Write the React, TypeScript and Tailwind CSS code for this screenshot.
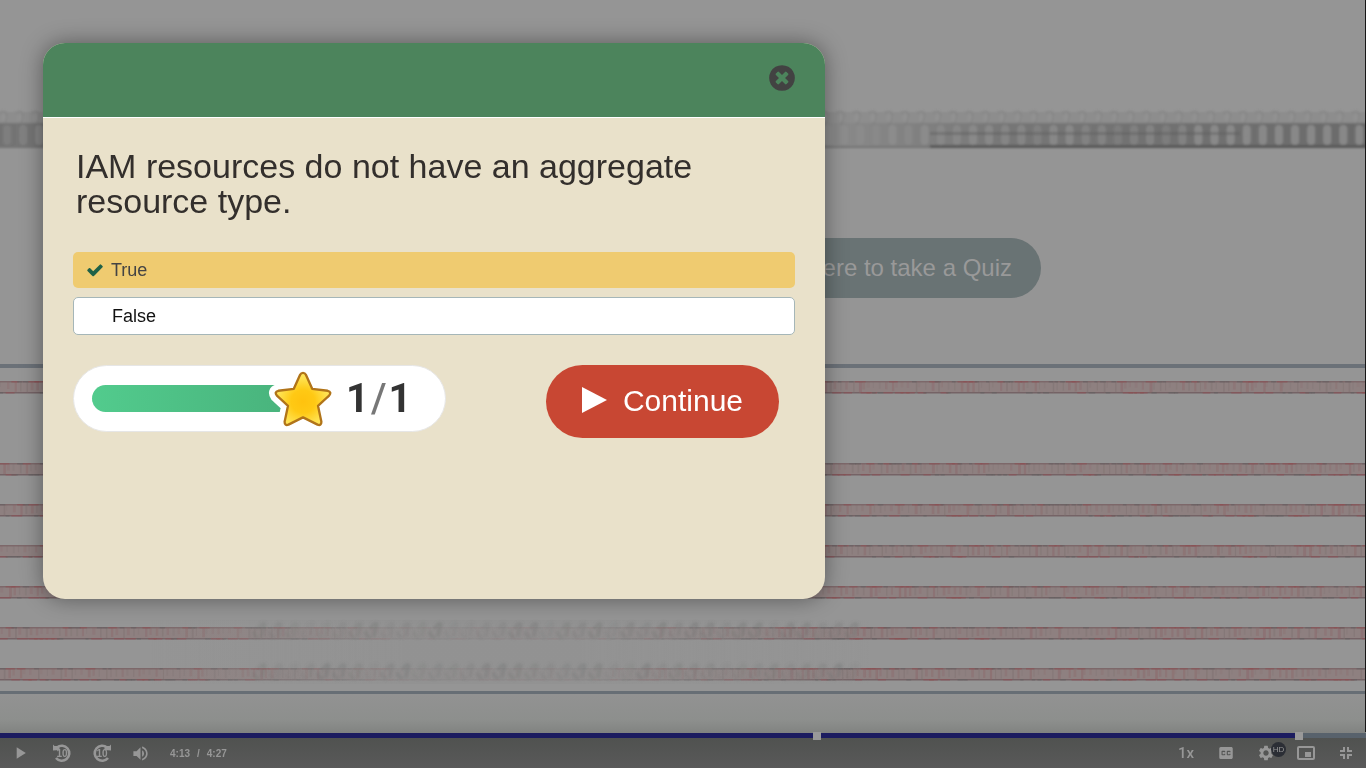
import React, { useState } from "react";
import { MdClosedCaption, MdPlayArrow, MdSettings, MdVolumeUp } from "react-icons/md";

const RED_ROWS = [381, 463, 504, 545, 586, 627, 668];

/* Small repeatable noise source for the smeared traces in the paused frame. */
function noise(n: number) {
  const v = Math.sin(n * 127.1) * 43758.5453;
  return v - Math.floor(v);
}

function RedBand({ y, row }: { y: number; row: number }) {
  return (
    <g>
      <rect x="0" y={y} width="1365" height="12" fill="#8e8080" />
      <rect x="0" y={y} width="1365" height="1.5" fill="#7d686a" />
      <rect x="0" y={y + 11} width="1365" height="1.5" fill="#756466" />
      {Array.from({ length: 240 }, (_, i) => {
        const r = noise(i + row * 311);
        const s = noise(i * 3 + row * 77);
        return (
          <g key={i}>
            <rect x={i * 5.7 + r * 4} y={y + 1} width={1 + s * 2} height={5 + r * 6} fill={s > 0.5 ? "#8b6164" : "#7c6e6d"} opacity={0.15 + r * 0.3} />
            <rect x={i * 5.7} y={y + (r > 0.5 ? 0 : 11)} width={3 + s * 8} height="1.5" fill={s > 0.5 ? "#8e4e52" : "#626060"} opacity={0.55} />
          </g>
        );
      })}
    </g>
  );
}

function GhostMarks({ y }: { y: number }) {
  return (
    <g fill="none" stroke="#6a6d6b">
      {Array.from({ length: 38 }, (_, i) => (
        <path
          key={i}
          d={`M${258 + i * 16} ${y + 2} q5 -8 7 -4 q-3 6 -3 12 m-8 -6 q-1 6 5 6`}
          strokeWidth="3"
          opacity={0.12 + noise(i + y) * 0.25}
        />
      ))}
    </g>
  );
}

function PausedFrame() {
  return (
    <svg className="absolute inset-0 h-full w-full" viewBox="0 0 1366 768" preserveAspectRatio="none" aria-hidden="true">
      <defs>
        <linearGradient id="band" x1="0" x2="1">
          <stop offset="0" stopColor="#727272" />
          <stop offset="0.1" stopColor="#7d7d7d" />
          <stop offset="0.6" stopColor="#8b8b8b" />
          <stop offset="0.74" stopColor="#767676" />
          <stop offset="1" stopColor="#6b6b6b" />
        </linearGradient>
        <linearGradient id="ghost" x1="0" x2="1">
          <stop offset="0" stopColor="#929292" stopOpacity="0" />
          <stop offset="0.35" stopColor="#929292" stopOpacity="0.85" />
          <stop offset="0.6" stopColor="#929292" stopOpacity="0.85" />
          <stop offset="1" stopColor="#929292" stopOpacity="0" />
        </linearGradient>
        <linearGradient id="floor" x1="0" x2="0" y1="0" y2="1">
          <stop offset="0" stopColor="#929292" />
          <stop offset="0.65" stopColor="#8d8f8d" />
          <stop offset="1" stopColor="#808280" />
        </linearGradient>
        <filter id="soft" x="0" y="-20%" width="100%" height="140%">
          <feGaussianBlur stdDeviation="1" />
        </filter>
        <filter id="softer">
          <feGaussianBlur stdDeviation="0.6" />
        </filter>
        <filter id="smear">
          <feGaussianBlur stdDeviation="1.4" />
        </filter>
      </defs>
      <rect width="1366" height="768" fill="#959595" />
      <g filter="url(#soft)">
        <rect x="-4" y="112" width="1374" height="12" fill="#8d8d8d" />
        <rect x="-4" y="123" width="1374" height="25" fill="url(#band)" />
        {Array.from({ length: 86 }, (_, i) => {
          const x = i * 16.1 + 3;
          const strength = x > 1180 ? 0.75 : 0.35 + noise(i) * 0.35;
          return (
            <g key={i}>
              <rect x={x} y="125" width="8" height="20" rx="4" fill="#919191" opacity={strength} />
              <ellipse cx={x + 2} cy="118" rx="4" ry="5" fill="#959595" opacity="0.6" />
              <path d={`M${x - 4} 113 q7 -4 8 3 q0 6 -4 8`} fill="none" stroke="#7c7c7c" strokeWidth="2" opacity="0.45" />
            </g>
          );
        })}
        <rect x="930" y="132" width="310" height="3" fill="#606060" opacity="0.5" />
        <rect x="-4" y="146" width="940" height="2" fill="#747474" />
        <rect x="930" y="145" width="440" height="3" fill="#5a5a5a" />
      </g>
      <g filter="url(#softer)">
        {RED_ROWS.map((y, i) => (
          <RedBand key={y} y={y} row={i} />
        ))}
      </g>
      <rect x="150" y="620" width="720" height="64" fill="url(#ghost)" />
      <g filter="url(#smear)">
        <GhostMarks y={627} />
        <GhostMarks y={668} />
      </g>
      <rect x="0" y="364" width="1366" height="4" fill="#6b7178" />
      <rect x="0" y="694" width="1366" height="40" fill="url(#floor)" />
      <rect x="0" y="691" width="1366" height="3" fill="#676e75" />
      <rect x="1365" y="0" width="1" height="732" fill="#171717" />
    </svg>
  );
}

function Star() {
  const shape =
    "M30 4 Q32 4 33 6 L39.500 20.500 L55.500 22.500 Q60 23.500 57 27.500 L45.500 38 L49 54.500 Q49 59 45 57.500 L30 50 L15 57.500 Q11 59 11 54.500 L14.500 38 L3 27.500 Q0 23.500 4.500 22.500 L20.500 20.500 L27 6 Q28 4 30 4Z";
  return (
    <svg className="absolute -top-4 -right-[51px] h-[60px] w-[60px] overflow-visible" viewBox="0 0 60 62" aria-hidden="true">
      <defs>
        <radialGradient id="gold" cx="0.5" cy="0.55" r="0.55">
          <stop offset="0" stopColor="#ffc20e" />
          <stop offset="0.4" stopColor="#ffc914" />
          <stop offset="0.8" stopColor="#ffe14e" />
          <stop offset="1" stopColor="#ffe65b" />
        </radialGradient>
        <clipPath id="bar-edge">
          <rect x="-8" y="14" width="60" height="32" />
        </clipPath>
      </defs>
      <path d={shape} fill="#fff" stroke="#fff" strokeWidth="14" strokeLinejoin="round" clipPath="url(#bar-edge)" />
      <path d={shape} fill="url(#gold)" stroke="#b17419" strokeWidth="2.400" strokeLinejoin="round" />
    </svg>
  );
}

function CheckMark() {
  return (
    <svg className="h-[18px] w-[18px]" viewBox="0 0 1792 1792" fill="currentColor" aria-hidden="true">
      <path d="M1671 566q0 40-28 68l-724 724-136 136q-28 28-68 28t-68-28l-136-136-362-362q-28-28-28-68t28-68l136-136q28-28 68-28t68 28l294 295 656-657q28-28 68-28t68 28l136 136q28 28 28 68z" />
    </svg>
  );
}

function CloseCircle() {
  return (
    <svg className="h-[30px] w-[30px]" viewBox="0 0 1792 1792" fill="currentColor" aria-hidden="true">
      <path d="M1277 1122q0-26-19-45l-181-181 181-181q19-19 19-45 0-27-19-46l-90-90q-19-19-46-19-26 0-45 19l-181 181-181-181q-19-19-45-19-27 0-46 19l-90 90q-19 19-19 46 0 26 19 45l181 181-181 181q-19 19-19 45 0 27 19 46l90 90q19 19 46 19 26 0 45-19l181-181 181 181q19 19 45 19 27 0 46-19l90-90q19-19 19-46zm387-226q0 209-103 385.500t-279.500 279.500-385.500 103-385.500-103-279.500-279.500-103-385.500 103-385.500 279.500-279.500 385.500-103 385.500 103 279.500 279.500 103 385.500z" />
    </svg>
  );
}

function SkipIcon({ forward = false }: { forward?: boolean }) {
  return (
    <svg className="h-5 w-5" viewBox="0 0 20 20" aria-hidden="true">
      <g transform={forward ? "translate(20 0) scale(-1 1)" : undefined}>
        <path d="M5 4.500 A7.500 7.500 0 1 1 4 15" fill="none" stroke="currentColor" strokeWidth="2.600" />
        <path d="M1 1.500 L2.500 3 L7.500 3 L7.500 7 L1 7.500 Z" fill="currentColor" />
      </g>
      <text x="10" y="13.500" textAnchor="middle" fontSize="10" fontWeight="700" fill="currentColor">
        10
      </text>
    </svg>
  );
}

function PipIcon() {
  return (
    <svg className="h-4 w-[18px]" viewBox="0 0 18 16" aria-hidden="true">
      <rect x="1" y="2" width="16" height="12" rx="1" fill="none" stroke="currentColor" strokeWidth="2" />
      <rect x="8" y="7" width="6" height="5" fill="currentColor" />
    </svg>
  );
}

function ShrinkIcon() {
  return (
    <svg className="h-3 w-3" viewBox="0 0 12 12" fill="none" stroke="currentColor" strokeWidth="2" aria-hidden="true">
      <path d="M0 4H4V0M8 0V4H12M12 8H8V12M4 12V8H0" />
    </svg>
  );
}

function Control({ label, children }: { label: string; children: React.ReactNode }) {
  return (
    <button type="button" aria-label={label} className="relative flex h-[30px] w-10 items-center justify-center">
      {children}
    </button>
  );
}

function PlayerBar() {
  return (
    <footer className="relative mt-auto text-[#979797]">
      <div className="relative h-[5px] bg-[#58626c]" role="progressbar" aria-label="Playback position" aria-valuenow={253} aria-valuemin={0} aria-valuemax={267}>
        <div className="h-full w-[95%] bg-[#1c1c60]" />
        <span className="absolute -top-px left-[59.5%] h-2 w-2 bg-[#999]" />
        <span className="absolute -top-px left-[94.8%] h-2 w-2 bg-[#999]" />
      </div>
      <div className="flex h-[30px] items-center bg-linear-to-b from-[#505250] to-[#595959]">
        <Control label="Play">
          <MdPlayArrow size={20} />
        </Control>
        <div className="flex pl-[2px]">
          <Control label="Back 10 seconds">
            <SkipIcon />
          </Control>
          <Control label="Forward 10 seconds">
            <SkipIcon forward />
          </Control>
        </div>
        <button type="button" aria-label="Volume" className="flex h-[30px] w-9 items-center justify-center">
          <MdVolumeUp size={19} />
        </button>
        <div className="flex gap-[7px] pl-3 text-[10px] font-bold">
          <span>4:13</span>
          <span>/</span>
          <span>4:27</span>
        </div>
        <div className="ml-auto flex">
          <Control label="Playback speed">
            <span className="font-[Roboto,sans-serif] text-[15px] font-medium">1x</span>
          </Control>
          <Control label="Captions">
            <MdClosedCaption size={18} />
          </Control>
          <Control label="Quality">
            <MdSettings size={18} />
            <span className="absolute top-1 right-0 flex h-[15px] w-[15px] items-center justify-center rounded-full bg-[#2b2e35] text-[8px]">HD</span>
          </Control>
          <Control label="Picture in picture">
            <PipIcon />
          </Control>
          <Control label="Exit full screen">
            <ShrinkIcon />
          </Control>
        </div>
      </div>
    </footer>
  );
}

function QuizDialog() {
  const [answer, setAnswer] = useState("True");
  return (
    <section role="dialog" aria-labelledby="question" className="relative mx-[43px] mt-[43px] min-h-[556px] max-w-[782px] overflow-hidden rounded-[22px] bg-[#e9e1ca] shadow-[0_0_22px_rgba(0,0,0,0.4)]">
      <header className="flex h-[75px] items-center justify-end border-b border-white bg-[#4c845c] px-7 pb-1">
        <button type="button" aria-label="Close" className="text-[#424242]">
          <CloseCircle />
        </button>
      </header>
      <div className="px-[30px] pt-[31px]">
        <h1 id="question" className="px-[3px] text-[34px] leading-[35px] text-[#332f2c]">
          IAM resources do not have an aggregate resource type.
        </h1>
        <fieldset aria-labelledby="question" className="mt-[33px] flex flex-col gap-[9px] text-lg">
          {["True", "False"].map((option) => {
            const chosen = option === answer;
            return (
              <label
                key={option}
                className={
                  chosen
                    ? "flex h-9 items-center rounded-[5px] bg-[#efcb70] px-[13px] text-[#444]"
                    : "flex h-[38px] items-center rounded-[5px] border border-[#a5b6b8] bg-white px-[13px] text-[#111]"
                }
              >
                <input type="radio" name="answer" value={option} checked={chosen} onChange={() => setAnswer(option)} className="h-0 w-0 appearance-none" />
                <span className="w-[25px] text-[#1f6147]">{chosen && <CheckMark />}</span>
                {option}
              </label>
            );
          })}
        </fieldset>
        <div className="mt-[30px] flex flex-wrap items-start justify-between gap-4 pr-4">
          <div className="flex h-[67px] w-[373px] items-center rounded-full border border-[#e6e6e6] bg-white pl-[18px]">
            <div className="relative h-[27px] w-[190px] rounded-l-full bg-linear-to-r from-[#52cb8d] to-[#49b47d]">
              <Star />
            </div>
            <p className="flex gap-[2px] pl-16 font-[Roboto,sans-serif] text-[40px] leading-10 font-bold text-[#333]">
              <span>1</span>
              <span className="font-medium text-[#777]">/</span>
              <span>1</span>
            </p>
          </div>
          <button type="button" className="flex h-[73px] w-[233px] items-center justify-center gap-4 rounded-full bg-[#c84733] pb-[3px] text-[30px] text-white">
            <svg className="h-[26px] w-[25px]" viewBox="0 0 25 26" fill="currentColor" aria-hidden="true">
              <path d="M0 0 L25 13 L0 26Z" />
            </svg>
            Continue
          </button>
        </div>
      </div>
    </section>
  );
}

export default function App() {
  return (
    <main className="relative flex min-h-screen flex-col overflow-hidden bg-[#959595] font-['Liberation_Sans',Arial,sans-serif]">
      <PausedFrame />
      <a href="#question" className="absolute top-[238px] right-[325px] flex h-[60px] items-center rounded-full bg-[#697374] px-[29px] text-2xl text-[#999]">
        Click here to take a Quiz
      </a>
      <QuizDialog />
      <PlayerBar />
    </main>
  );
}
